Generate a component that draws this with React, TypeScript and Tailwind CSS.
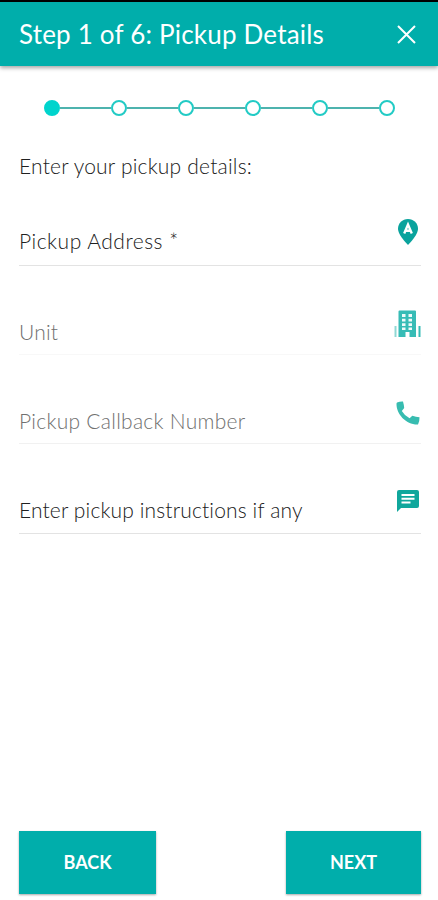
import React from 'react';

const STEPS = [1, 2, 3, 4, 5, 6];

const PinIcon = () => (
  <svg width="20" height="26" viewBox="0 0 20 26">
    <path d="M10 0C4.3 0 0 4.3 0 9.8C0 16.4 10 26 10 26S20 16.4 20 9.8C20 4.3 15.7 0 10 0Z" fill="#0aa39d" />
    <path d="M6.2 14.5L10 5.5L13.8 14.5M7.4 11.8H12.6" fill="none" stroke="#fff" strokeWidth="2.4" />
  </svg>
);

const BuildingIcon = () => (
  <svg width="27" height="28" viewBox="0 0 27 28">
    <path d="M4.5 1.5Q4.5 .5 5.5 .5H21Q22 .5 22 1.5V27H15.5V22H11.5V27H4.5Z" fill="#37bcb6" />
    <path
      d="M8 4h3.5v3H8zM14.5 4H18v3h-3.5zM8 8.7h3.5v2.8H8zM14.5 8.7H18v2.8h-3.5zM8 13.2h3.5V16H8zM14.5 13.2H18V16h-3.5zM8 17.5h3.5V20H8zM14.5 17.5H18V20h-3.5z"
      fill="#effaf9"
    />
    <path d="M.5 16H2.5V27H.5Z" fill="#91d8d4" />
    <path d="M24.5 16H26.5V27H24.5Z" fill="#37bcb6" />
  </svg>
);

const PhoneIcon = () => (
  <svg width="24" height="24" viewBox="0 0 24 24">
    <path
      d="M1 1.5Q4 .3 7 .5Q8 4 8.2 7L5.8 10Q8.8 15 13.6 17.2L16.3 14.7Q20 16 23.5 16.2Q23.7 20 22 23.4C10 23.8 .2 13 .5 2.4Z"
      fill="#37bcb0"
    />
  </svg>
);

const MessageIcon = () => (
  <svg width="22" height="22" viewBox="0 0 22 22">
    <path d="M2 0H20Q22 0 22 2V16Q22 18 20 18H4L0 22V2Q0 0 2 0Z" fill="#10a79c" />
    <path d="M4.5 5H17.5M4.5 8.8H17.5M4.5 12.5H13.5" stroke="#fff" strokeWidth="2" />
  </svg>
);

type FieldProps = {
  label: string;
  icon: React.ReactNode;
  className: string;
  textClass: string;
};

const Field = ({ label, icon, className, textClass }: FieldProps) => (
  <div className={`flex items-end justify-between border-b ${className}`}>
    <span className={`whitespace-nowrap text-[21px] font-light leading-6 ${textClass}`}>{label}</span>
    <span className="flex w-[27px] shrink-0 justify-center">{icon}</span>
  </div>
);

const Stepper = () => (
  <div className="flex items-center pl-[25px] pr-[26px]">
    {STEPS.map((step) => (
      <React.Fragment key={step}>
        {step > 1 && <div className="h-[2px] flex-1 bg-[#4db3ae]" />}
        <div
          className={`h-4 w-4 shrink-0 rounded-full border-2 ${
            step === 1 ? 'border-[#00d4cd] bg-[#00d4cd]' : 'border-[#22cbc5] bg-white'
          }`}
        />
      </React.Fragment>
    ))}
  </div>
);

const App = () => {
  return (
    <div className="flex h-[900px] w-full flex-col bg-white font-['Lato',sans-serif]">
      <header className="flex h-[66px] shrink-0 items-center justify-between border-t-2 border-black bg-[#00aeab] pl-[19px] pr-[22px] shadow-[0_2px_4px_rgba(0,0,0,0.35)]">
        <h1 className="whitespace-nowrap pb-px text-[26px] leading-8 tracking-[0.2px] text-white">Step 1 of 6: Pickup Details</h1>
        <button aria-label="Close">
          <svg width="19" height="19" viewBox="0 0 19 19" fill="none" stroke="#fff" strokeWidth="2">
            <path d="M1 1L18 18M18 1L1 18" />
          </svg>
        </button>
      </header>

      <main className="flex flex-1 flex-col pl-[19px] pr-[17px] pt-[34px]">
        <Stepper />
        <p className="mt-[38px] whitespace-nowrap text-[21px] font-light leading-6 tracking-[0.2px] text-[#202020]">Enter your pickup details:</p>

        <Field
          label="Pickup Address *"
          className="mt-[38px] h-[50px] border-[#e3e3e3] pb-[12px]"
          textClass="tracking-[0.5px] text-[#202020]"
          icon={<span className="mb-[8px]"><PinIcon /></span>}
        />
        <Field
          label="Unit"
          className="h-[89px] border-[#f8f8f8] pb-[10px]"
          textClass="tracking-[0.2px] text-[#707070]"
          icon={<span className="mb-[6px]"><BuildingIcon /></span>}
        />
        <Field
          label="Pickup Callback Number"
          className="h-[89px] border-[#f1f1f1] pb-[10px]"
          textClass="tracking-[0.27px] text-[#707070]"
          icon={<span className="mb-[8px]"><PhoneIcon /></span>}
        />
        <Field
          label="Enter pickup instructions if any"
          className="h-[90px] border-[#e3e3e3] pb-[11px]"
          textClass="tracking-[0.14px] text-[#202020]"
          icon={<span className="mb-[10px]"><MessageIcon /></span>}
        />

        <div className="mb-[6px] mt-auto flex justify-between">
          <button className="h-[63px] w-[137px] bg-[#00aeab] pb-[2px] text-lg font-bold text-white shadow-[0_1px_2px_rgba(0,0,0,0.35)]">BACK</button>
          <button className="h-[63px] w-[135px] bg-[#00aeab] pb-[2px] text-lg font-bold text-white shadow-[0_1px_2px_rgba(0,0,0,0.35)]">NEXT</button>
        </div>
      </main>
    </div>
  );
};

export default App;
